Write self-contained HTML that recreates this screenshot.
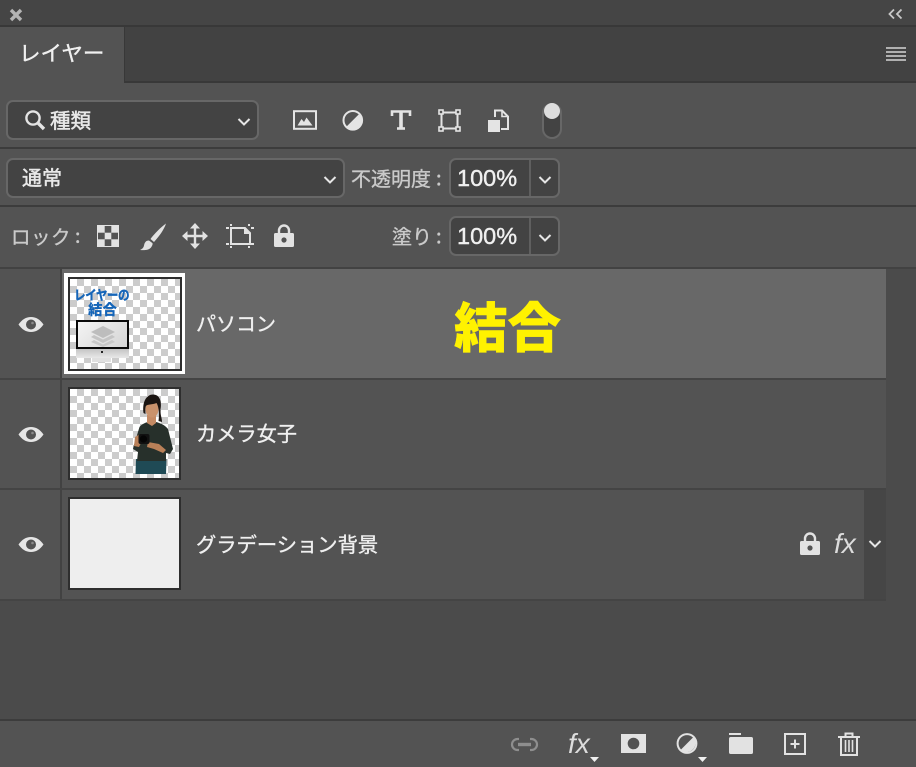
<!DOCTYPE html>
<html lang="ja">
<head>
<meta charset="utf-8">
<title>レイヤー</title>
<style>
html,body{margin:0;padding:0;background:#535353;}
#p{position:relative;width:916px;height:767px;overflow:hidden;background:#535353;font-family:"Liberation Sans","Noto Sans CJK JP",sans-serif;color:#e8e8e8;filter:blur(.3px);}
.a{position:absolute;}
.t{position:absolute;white-space:nowrap;line-height:1;font-family:"Noto Sans CJK JP","Liberation Sans",sans-serif;font-weight:400;-webkit-text-stroke:.35px currentColor;}
.n{font-family:'Liberation Sans',sans-serif;font-size:23.5px;color:#f0f0f0;-webkit-text-stroke:.4px currentColor;}
.box{position:absolute;box-sizing:border-box;background:#434343;border:2px solid #676767;border-radius:7px;}
.chk{background-color:#fff;background-image:conic-gradient(#ccc 25%,#fff 0 50%,#ccc 0 75%,#fff 0);background-size:14px 14px;}
svg{position:absolute;overflow:visible;}
</style>
</head>
<body>
<div id="p">
<!-- top bar -->
<div class="a" style="left:0;top:0;width:916px;height:26px;background:#454545;"></div>
<div class="a" style="left:0;top:25px;width:916px;height:2px;background:#383838;"></div>
<svg style="left:9px;top:8px" width="14" height="14" viewBox="0 0 14 14"><path d="M2 2L12 12M12 2L2 12" stroke="#b4b4b4" stroke-width="3.4"/></svg>
<svg style="left:888px;top:8px" width="16" height="12" viewBox="0 0 16 12"><path d="M6 1.5L1.5 6L6 10.5M13.5 1.5L9 6L13.5 10.5" fill="none" stroke="#c8c8c8" stroke-width="1.8"/></svg>
<!-- tab bar -->
<div class="a" style="left:0;top:27px;width:916px;height:55px;background:#424242;"></div>
<div class="a" style="left:124px;top:81px;width:792px;height:2px;background:#383838;"></div>
<div class="a" style="left:0;top:27px;width:124px;height:56px;background:#535353;"></div>
<div class="a" style="left:124px;top:27px;width:1px;height:56px;background:#383838;"></div>
<div class="t" style="left:19px;top:42px;font-size:21.5px;color:#f0f0f0;">レイヤー</div>
<div class="a" style="left:886px;top:47px;width:20px;height:2px;background:#b0b0b0;"></div>
<div class="a" style="left:886px;top:51px;width:20px;height:2px;background:#b0b0b0;"></div>
<div class="a" style="left:886px;top:55px;width:20px;height:2px;background:#b0b0b0;"></div>
<div class="a" style="left:886px;top:59px;width:20px;height:2px;background:#b0b0b0;"></div>

<!-- filter row -->
<div class="box" style="left:6px;top:100px;width:253px;height:40px;"></div>
<svg style="left:24px;top:109px" width="22" height="22" viewBox="0 0 22 22"><circle cx="9" cy="9" r="6.6" fill="none" stroke="#e4e4e4" stroke-width="2.4"/><path d="M14 14L20 20" stroke="#e4e4e4" stroke-width="3.4"/></svg>
<div class="t" style="left:50px;top:109px;font-size:20.5px;-webkit-text-stroke:.5px currentColor;">種類</div>
<svg style="left:237px;top:117px" width="14" height="10" viewBox="0 0 14 10"><path d="M1.5 2L7 7.5L12.5 2" fill="none" stroke="#e6e6e6" stroke-width="2"/></svg>
<!-- filter icons -->
<svg style="left:293px;top:110px" width="24" height="20" viewBox="0 0 24 20"><rect x="1" y="1.2" width="22" height="17.6" fill="none" stroke="#e4e4e4" stroke-width="2"/><path d="M4.5 15.5L8.5 9L11 12L13.5 7.5L19.5 15.5Z" fill="#e4e4e4"/></svg>
<svg style="left:342px;top:110px" width="22" height="21" viewBox="0 0 22 21"><circle cx="10.8" cy="10.3" r="9.3" fill="none" stroke="#e4e4e4" stroke-width="2"/><path d="M17.4 3.7A9.3 9.3 0 0 1 4.2 16.9Z" fill="#e4e4e4"/></svg>
<svg style="left:390px;top:109px" width="22" height="22" viewBox="0 0 22 22"><path d="M2 7V2.5H20V7" fill="none" stroke="#e4e4e4" stroke-width="2.6"/><path d="M11 2.5V19" stroke="#e4e4e4" stroke-width="3.6"/><path d="M7 19.5H15" stroke="#e4e4e4" stroke-width="2.6"/></svg>
<svg style="left:438px;top:109px" width="23" height="23" viewBox="0 0 23 23"><rect x="3.5" y="3.5" width="16" height="16" fill="none" stroke="#e4e4e4" stroke-width="2"/><g fill="#535353" stroke="#e4e4e4" stroke-width="1.6"><rect x="1" y="1" width="4" height="4"/><rect x="18" y="1" width="4" height="4"/><rect x="1" y="18" width="4" height="4"/><rect x="18" y="18" width="4" height="4"/></g></svg>
<svg style="left:488px;top:109px" width="21" height="23" viewBox="0 0 21 23"><path d="M7 8V1.5H14L20 7.5V20H13" fill="none" stroke="#e4e4e4" stroke-width="2"/><path d="M14 1.5V7.5H20" fill="none" stroke="#e4e4e4" stroke-width="1.6"/><rect x="0" y="11" width="12" height="12" fill="#e4e4e4"/></svg>
<div class="a" style="left:542px;top:103px;width:20px;height:36px;box-sizing:border-box;background:#434343;border:2px solid #676767;border-radius:10px;"></div>
<div class="a" style="left:544px;top:103px;width:16px;height:16px;border-radius:50%;background:#dedede;"></div>

<div class="a" style="left:0;top:147px;width:916px;height:2px;background:#3c3c3c;"></div>

<!-- blend row -->
<div class="box" style="left:6px;top:158px;width:339px;height:40px;"></div>
<div class="t" style="left:22px;top:167px;font-size:20px;-webkit-text-stroke:.5px currentColor;">通常</div>
<svg style="left:323px;top:175px" width="14" height="10" viewBox="0 0 14 10"><path d="M1.5 2L7 7.5L12.5 2" fill="none" stroke="#e6e6e6" stroke-width="2"/></svg>
<div class="t" style="left:351px;top:168px;font-size:20px;color:#cacaca;">不透明度</div>
<div class="t" style="left:436px;top:167px;font-size:20px;color:#cacaca;">:</div>
<div class="box" style="left:449px;top:158px;width:111px;height:40px;"></div>
<div class="a" style="left:529px;top:160px;width:2px;height:36px;background:#5f5f5f;"></div>
<div class="t n" style="left:457px;top:167px;">100%</div>
<svg style="left:538px;top:175px" width="14" height="10" viewBox="0 0 14 10"><path d="M1.5 2L7 7.5L12.5 2" fill="none" stroke="#e6e6e6" stroke-width="2"/></svg>

<div class="a" style="left:0;top:205px;width:916px;height:2px;background:#3c3c3c;"></div>

<!-- lock row -->
<div class="t" style="left:11px;top:226px;font-size:19.5px;color:#cacaca;letter-spacing:.5px;">ロック</div>
<div class="t" style="left:75px;top:225px;font-size:19.5px;color:#cacaca;">:</div>
<svg style="left:97px;top:225px" width="22" height="22" viewBox="0 0 22 22"><rect width="22" height="22" fill="#e2e2e2"/><rect x="7.7" y="1" width="6.6" height="6.7" fill="#535353"/><rect x="1" y="7.7" width="6.7" height="6.6" fill="#535353"/><rect x="14.3" y="7.7" width="6.7" height="6.6" fill="#535353"/><rect x="7.7" y="14.3" width="6.6" height="6.7" fill="#535353"/></svg>
<svg style="left:140px;top:223px" width="27" height="28" viewBox="0 0 27 28"><path d="M26 0.5C21 4 14 11 10.5 16L14 19C18.5 14 24 7 26 0.5Z" fill="#e2e2e2"/><path d="M9 17.5C5.5 17.5 4.5 20 4 22.5C3.5 25 2 26 0 27C4.5 27.5 9 27 11 24.5C12.5 22.5 13 20.5 12.3 20Z" fill="#e2e2e2"/></svg>
<svg style="left:182px;top:223px" width="26" height="26" viewBox="0 0 26 26"><path d="M13 2V24M2 13H24" stroke="#e2e2e2" stroke-width="2.4"/><path d="M13 0L18 5.5H8ZM13 26L8 20.5H18ZM0 13L5.5 8V18ZM26 13L20.5 18V8Z" fill="#e2e2e2"/></svg>
<svg style="left:226px;top:224px" width="28" height="24" viewBox="0 0 28 24"><path d="M5 4H19L24 9V20H5Z" fill="none" stroke="#e2e2e2" stroke-width="2"/><path d="M18 4V10H24" fill="#e2e2e2"/><g fill="#e2e2e2"><rect x="0" y="3" width="3" height="2"/><rect x="4" y="0" width="2" height="2"/><rect x="25" y="3" width="3" height="2"/><rect x="22" y="0" width="2" height="2"/><rect x="0" y="19" width="3" height="2"/><rect x="4" y="22" width="2" height="2"/><rect x="25" y="19" width="3" height="2"/><rect x="22" y="22" width="2" height="2"/></g></svg>
<svg style="left:274px;top:224px" width="20" height="23" viewBox="0 0 20 23"><path d="M5 10V6.5A5 5 0 0 1 15 6.5V10" fill="none" stroke="#e2e2e2" stroke-width="2.4"/><rect x="0" y="9" width="20" height="14" rx="1.5" fill="#e2e2e2"/><circle cx="10" cy="16" r="2.6" fill="#535353"/></svg>
<div class="t" style="left:392px;top:226px;font-size:20px;color:#cacaca;">塗り</div>
<div class="t" style="left:436px;top:225px;font-size:20px;color:#cacaca;">:</div>
<div class="box" style="left:449px;top:216px;width:111px;height:40px;"></div>
<div class="a" style="left:529px;top:218px;width:2px;height:36px;background:#5f5f5f;"></div>
<div class="t n" style="left:457px;top:225px;">100%</div>
<svg style="left:538px;top:233px" width="14" height="10" viewBox="0 0 14 10"><path d="M1.5 2L7 7.5L12.5 2" fill="none" stroke="#e6e6e6" stroke-width="2"/></svg>

<!-- layers area -->
<div class="a" style="left:0;top:267px;width:916px;height:2px;background:#424242;"></div>
<div class="a" style="left:0;top:269px;width:916px;height:451px;background:#4b4b4b;"></div>

<!-- row 1 -->
<div class="a" style="left:0;top:269px;width:60px;height:109px;background:#535353;"></div>
<div class="a" style="left:62px;top:269px;width:824px;height:109px;background:#686868;"></div>
<div class="a" style="left:60px;top:269px;width:2px;height:109px;background:#424242;"></div>
<div class="a" style="left:0;top:378px;width:886px;height:2px;background:#444;"></div>
<!-- row 2 -->
<div class="a" style="left:0;top:380px;width:886px;height:108px;background:#535353;"></div>
<div class="a" style="left:60px;top:380px;width:2px;height:108px;background:#424242;"></div>
<div class="a" style="left:0;top:488px;width:886px;height:2px;background:#444;"></div>
<!-- row 3 -->
<div class="a" style="left:0;top:490px;width:886px;height:109px;background:#535353;"></div>
<div class="a" style="left:60px;top:490px;width:2px;height:109px;background:#424242;"></div>
<div class="a" style="left:864px;top:490px;width:22px;height:109px;background:#464646;"></div>
<div class="a" style="left:0;top:599px;width:886px;height:2px;background:#444;"></div>

<!-- eyes -->
<svg style="left:18px;top:317px" width="26" height="15" viewBox="0 0 26 15"><path d="M0.5 7.5C4 2.5 8 0 13 0S22 2.5 25.5 7.5C22 12.5 18 15 13 15S4 12.5 0.5 7.5Z" fill="#e6e6e6"/><circle cx="13" cy="7.5" r="5" fill="#535353"/><circle cx="14.5" cy="6" r="1.3" fill="#8a8a8a"/></svg>
<svg style="left:18px;top:427px" width="26" height="15" viewBox="0 0 26 15"><path d="M0.5 7.5C4 2.5 8 0 13 0S22 2.5 25.5 7.5C22 12.5 18 15 13 15S4 12.5 0.5 7.5Z" fill="#e6e6e6"/><circle cx="13" cy="7.5" r="5" fill="#535353"/><circle cx="14.5" cy="6" r="1.3" fill="#8a8a8a"/></svg>
<svg style="left:18px;top:537px" width="26" height="15" viewBox="0 0 26 15"><path d="M0.5 7.5C4 2.5 8 0 13 0S22 2.5 25.5 7.5C22 12.5 18 15 13 15S4 12.5 0.5 7.5Z" fill="#e6e6e6"/><circle cx="13" cy="7.5" r="5" fill="#535353"/><circle cx="14.5" cy="6" r="1.3" fill="#8a8a8a"/></svg>

<!-- thumb 1 -->
<div class="a" style="left:64px;top:273px;width:121px;height:101px;background:#fff;"></div>
<div class="a chk" style="left:68px;top:277px;width:114px;height:94px;box-sizing:border-box;border:2.5px solid #2e2e2e;overflow:hidden;background-clip:padding-box;">
  <div class="t" style="left:4px;top:9px;font-size:13.5px;font-weight:900;color:#1565b8;letter-spacing:-.6px;transform:scaleX(.86);transform-origin:0 0;-webkit-text-stroke:0;">レイヤーの</div>
  <div class="t" style="left:18px;top:24px;font-size:14.5px;font-weight:900;color:#1565b8;-webkit-text-stroke:0;">結合</div>
  <div class="a" style="left:5.5px;top:40.5px;width:53px;height:29px;box-sizing:border-box;border:2.5px solid #0a0a0a;background:linear-gradient(135deg,#f4f4f4,#d4d4d4);"></div>
  <svg style="left:21px;top:47px" width="24" height="21" viewBox="0 0 24 21"><path d="M12 0L24 6L12 12L0 6Z" fill="#bdbdbd"/><path d="M3 9L12 13.5L21 9L24 11L12 17L0 11Z" fill="#c4c4c4"/><path d="M3 14L12 18.5L21 14L24 16L12 21L0 16Z" fill="#c8c8c8"/></svg>
  <div class="a" style="left:5.5px;top:69.5px;width:53px;height:9px;background:linear-gradient(#c4c4c4,#e8e8e8);"></div>
  <div class="a" style="left:31px;top:72px;width:2px;height:2px;background:#222;"></div>
  <div class="a" style="left:22px;top:79px;width:19px;height:4px;background:#e0e0e0;"></div>
</div>
<div class="t" style="left:196px;top:313px;font-size:20px;color:#f0f0f0;">パソコン</div>
<div class="t" style="left:454px;top:298px;font-size:53.5px;font-weight:900;color:#fff200;-webkit-text-stroke:.4px currentColor;">結合</div>

<!-- thumb 2 -->
<div class="a chk" style="left:68px;top:387px;width:113px;height:93px;box-sizing:border-box;border:2.5px solid #2e2e2e;overflow:hidden;background-clip:padding-box;">
  <svg style="left:0;top:0" width="108" height="88" viewBox="0 0 108 88">
    <path d="M66 70L65.5 85H96L96.5 70Z" fill="#1f4a55"/>
    <path d="M78 33C74 34 71 36 69.5 38L64 56L63 60L68 63L67 72H96L96 64L100 65L103 60L98 40C95 36 90 34 86 33L82 36Z" fill="#27302b"/>
    <path d="M77 26H86V34L82 37L77 34Z" fill="#c48a64"/>
    <ellipse cx="82" cy="20" rx="6.5" ry="8.5" fill="#c9926c"/>
    <path d="M73.5 24C72 12 77 5.5 83 5.5C90 5.5 92 13 90.5 21C90 26 92 28 92 33L88.5 32C89.5 26 89 18 86.5 14C82 16 77 15 76 17C75 19 75.5 22 75.5 25Z" fill="#1b1512"/>
    <path d="M65 48L70 45L73 50L69 58L64 57ZM78 53L89 55L96 61L93 64L84 60L77 58Z" fill="#b98058"/>
    <rect x="68.5" y="45" width="11" height="10" rx="2" fill="#111"/>
    <circle cx="73.5" cy="50" r="3.6" fill="#050505"/>
  </svg>
</div>
<div class="t" style="left:196px;top:423px;font-size:20.2px;color:#f0f0f0;">カメラ女子</div>

<!-- thumb 3 -->
<div class="a" style="left:68px;top:497px;width:113px;height:93px;box-sizing:border-box;border:2.5px solid #2e2e2e;background:#eeeeee;"></div>
<div class="t" style="left:196px;top:533px;font-size:20.3px;color:#f0f0f0;">グラデーション背景</div>
<svg style="left:800px;top:532px" width="20" height="23" viewBox="0 0 20 23"><path d="M5 10V6.5A5 5 0 0 1 15 6.5V10" fill="none" stroke="#e2e2e2" stroke-width="2.4"/><rect x="0" y="9" width="20" height="14" rx="1.5" fill="#e2e2e2"/><circle cx="10" cy="16" r="2.6" fill="#535353"/></svg>
<div class="t" style="left:834px;top:530px;font-size:28px;font-family:'Liberation Sans',sans-serif;font-style:italic;color:#dcdcdc;-webkit-text-stroke:0;">fx</div>
<svg style="left:868px;top:539px" width="14" height="10" viewBox="0 0 14 10"><path d="M1.5 2L7 7.5L12.5 2" fill="none" stroke="#e6e6e6" stroke-width="2"/></svg>

<!-- bottom bar -->
<div class="a" style="left:0;top:719px;width:916px;height:2px;background:#3c3c3c;"></div>
<div class="a" style="left:0;top:721px;width:916px;height:46px;background:#535353;"></div>
<svg style="left:510px;top:737px" width="29" height="15" viewBox="0 0 29 15"><path d="M9 2H7.5A5.5 5.5 0 0 0 7.5 13H9M20 2H21.5A5.5 5.5 0 0 1 21.5 13H20" fill="none" stroke="#8e8e8e" stroke-width="2.2"/><path d="M8 7.5H21" stroke="#8e8e8e" stroke-width="3.4"/></svg>
<div class="t" style="left:568px;top:730px;font-size:28px;font-family:'Liberation Sans',sans-serif;font-style:italic;color:#dcdcdc;-webkit-text-stroke:0;">fx</div>
<svg style="left:590px;top:757px" width="9" height="5" viewBox="0 0 9 5"><path d="M0 0H9L4.5 5Z" fill="#f0f0f0"/></svg>
<svg style="left:621px;top:734px" width="25" height="19" viewBox="0 0 25 19"><rect width="25" height="19" fill="#e2e2e2"/><circle cx="12.5" cy="9.5" r="5.8" fill="#535353"/></svg>
<svg style="left:676px;top:733px" width="22" height="21" viewBox="0 0 22 21"><circle cx="11" cy="10.5" r="9.4" fill="none" stroke="#e2e2e2" stroke-width="2"/><path d="M17.6 3.9A9.4 9.4 0 0 1 4.4 17.1Z" fill="#e2e2e2"/></svg>
<svg style="left:698px;top:757px" width="9" height="5" viewBox="0 0 9 5"><path d="M0 0H9L4.5 5Z" fill="#f0f0f0"/></svg>
<svg style="left:729px;top:733px" width="24" height="21" viewBox="0 0 24 21"><rect x="0" y="0" width="12" height="2" fill="#e2e2e2"/><path d="M0 6C0 4.5 0.5 4 2 4H22C23.5 4 24 4.5 24 6V19C24 20.5 23.5 21 22 21H2C0.5 21 0 20.5 0 19Z" fill="#e2e2e2"/></svg>
<svg style="left:784px;top:733px" width="22" height="22" viewBox="0 0 22 22"><rect x="1" y="1" width="20" height="20" fill="none" stroke="#e2e2e2" stroke-width="2"/><path d="M11 6.5V15.5M6.5 11H15.5" stroke="#e2e2e2" stroke-width="2"/></svg>
<svg style="left:838px;top:732px" width="22" height="24" viewBox="0 0 22 24"><path d="M0 5H22M7.5 4.5V1.5H14.5V4.5" fill="none" stroke="#e2e2e2" stroke-width="2"/><path d="M3 5V23H19V5" fill="none" stroke="#e2e2e2" stroke-width="2"/><path d="M7.5 8V20M11 8V20M14.5 8V20" stroke="#e2e2e2" stroke-width="1.6"/></svg>
</div>
</body>
</html>
